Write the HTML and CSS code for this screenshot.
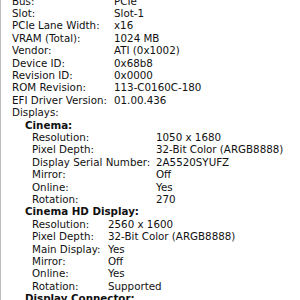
FILE: index.html
```html
<!DOCTYPE html>
<html>
<head>
<meta charset="utf-8">
<link rel="stylesheet" href="styles.css">
</head>
<body>
<div class="panel">
  <div class="kv top">
    <span>Bus:</span><span>PCIe</span>
    <span>Slot:</span><span>Slot-1</span>
    <span>PCIe Lane Width:</span><span>x16</span>
    <span>VRAM (Total):</span><span>1024 MB</span>
    <span>Vendor:</span><span>ATI (0x1002)</span>
    <span>Device ID:</span><span>0x68b8</span>
    <span>Revision ID:</span><span>0x0000</span>
    <span>ROM Revision:</span><span>113-C0160C-180</span>
    <span>EFI Driver Version:</span><span>01.00.436</span>
    <span>Displays:</span><span></span>
  </div>
  <div class="display">
    <div class="heading">Cinema:</div>
    <div class="kv sub cinema">
      <span>Resolution:</span><span>1050 x 1680</span>
      <span>Pixel Depth:</span><span>32-Bit Color (ARGB8888)</span>
      <span>Display Serial Number:</span><span>2A5520SYUFZ</span>
      <span>Mirror:</span><span>Off</span>
      <span>Online:</span><span>Yes</span>
      <span>Rotation:</span><span>270</span>
    </div>
  </div>
  <div class="display">
    <div class="heading">Cinema HD Display:</div>
    <div class="kv sub cinemahd">
      <span>Resolution:</span><span>2560 x 1600</span>
      <span>Pixel Depth:</span><span>32-Bit Color (ARGB8888)</span>
      <span>Main Display:</span><span>Yes</span>
      <span>Mirror:</span><span>Off</span>
      <span>Online:</span><span>Yes</span>
      <span>Rotation:</span><span>Supported</span>
    </div>
  </div>
  <div class="display">
    <div class="heading">Display Connector:</div>
  </div>
</div>
</body>
</html>
```
FILE: styles.css
```css
html, body {
  margin: 0;
  padding: 0;
  background: #ffffff;
  overflow: hidden;
}
body {
  width: 300px;
  height: 300px;
  font-family: "DejaVu Sans", sans-serif;
  font-size: 10.3px;
  line-height: 12.4px;
  color: #111111;
}
.panel {
  border-left: 1px solid #bdbdbd;
  box-sizing: border-box;
  padding-left: 11px;
  margin-top: -5.5px;
  height: 320px;
  white-space: nowrap;
}
.kv {
  display: grid;
}
.top {
  grid-template-columns: 102px auto;
}
.heading {
  font-weight: bold;
  padding-left: 13px;
}
.sub {
  padding-left: 20px;
}
.cinema {
  grid-template-columns: 124px auto;
}
.cinemahd {
  grid-template-columns: 76px auto;
}
```
